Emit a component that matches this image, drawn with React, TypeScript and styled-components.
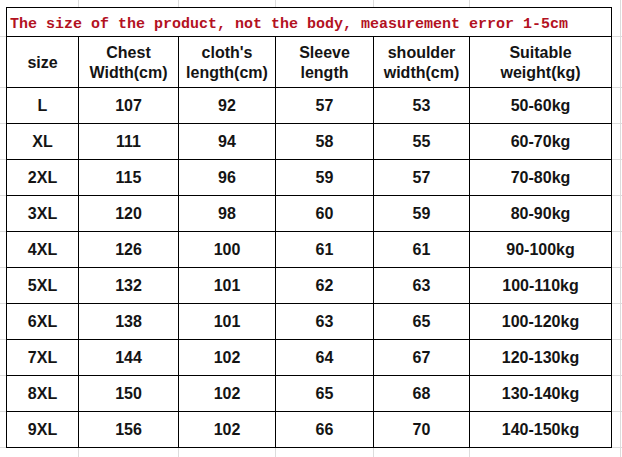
import React from "react";
import styled, { createGlobalStyle } from "styled-components";

const vLines = [78, 178, 275, 373, 469, 620];
const hLines = [36, 87, 123, 159, 195, 231, 267, 303, 339, 375, 411, 447];

const gridImages = [
  ...vLines.map(() => "linear-gradient(#dcdcdc,#dcdcdc)"),
  ...hLines.map(() => "linear-gradient(#dcdcdc,#dcdcdc)"),
].join(",");
const gridSizes = [
  ...vLines.map(() => "1px 100%"),
  ...hLines.map(() => "100% 1px"),
].join(",");
const gridPos = [
  ...vLines.map((x) => `${x}px 0`),
  ...hLines.map((y) => `0 ${y}px`),
].join(",");

const GlobalStyle = createGlobalStyle`
  html, body {
    margin: 0;
    padding: 0;
    background-color: #ffffff;
  }
  body {
    width: 622px;
    height: 457px;
    overflow: hidden;
    font-family: "Liberation Sans", Arial, sans-serif;
    background-image: ${gridImages};
    background-size: ${gridSizes};
    background-position: ${gridPos};
    background-repeat: no-repeat;
  }
`;

const Sheet = styled.div`
  padding: 7px 0 0 6px;
`;

const Table = styled.div`
  display: grid;
  grid-template-columns: 71px 99px 96px 97px 95px 141px;
  grid-template-rows: 28px 50px repeat(10, 35px);
  gap: 1px;
  padding: 1px;
  background: #000;
  width: max-content;
`;

const TitleCell = styled.div`
  grid-column: 1 / -1;
  background: #fff;
  display: flex;
  align-items: center;
  padding: 4px 0 0 3px;
  font-family: "Liberation Mono", "Courier New", monospace;
  font-weight: bold;
  font-size: 15px;
  color: #b3121f;
  white-space: pre;
`;

const Cell = styled.div`
  background: #fff;
  display: flex;
  align-items: center;
  justify-content: center;
  text-align: center;
  font-weight: bold;
  font-size: 16px;
  line-height: 20px;
  color: #141414;
  padding-top: 1px;
`;

const Lines = styled.div`
  display: flex;
  flex-direction: column;
`;

const headers = [
  ["size"],
  ["Chest", "Width(cm)"],
  ["cloth's", "length(cm)"],
  ["Sleeve", "length"],
  ["shoulder", "width(cm)"],
  ["Suitable", "weight(kg)"],
];

const rows = [
  ["L", "107", "92", "57", "53", "50-60kg"],
  ["XL", "111", "94", "58", "55", "60-70kg"],
  ["2XL", "115", "96", "59", "57", "70-80kg"],
  ["3XL", "120", "98", "60", "59", "80-90kg"],
  ["4XL", "126", "100", "61", "61", "90-100kg"],
  ["5XL", "132", "101", "62", "63", "100-110kg"],
  ["6XL", "138", "101", "63", "65", "100-120kg"],
  ["7XL", "144", "102", "64", "67", "120-130kg"],
  ["8XL", "150", "102", "65", "68", "130-140kg"],
  ["9XL", "156", "102", "66", "70", "140-150kg"],
];

export default function App() {
  return (
    <>
      <GlobalStyle />
      <Sheet>
        <Table>
          <TitleCell>The size of the product, not the body, measurement error 1-5cm</TitleCell>
          {headers.map((h, i) => (
            <Cell key={`h${i}`}>
              <Lines>
                {h.map((line, j) => (
                  <span key={j}>{line}</span>
                ))}
              </Lines>
            </Cell>
          ))}
          {rows.map((r, i) =>
            r.map((v, j) => <Cell key={`${i}-${j}`}>{v}</Cell>)
          )}
        </Table>
      </Sheet>
    </>
  );
}
